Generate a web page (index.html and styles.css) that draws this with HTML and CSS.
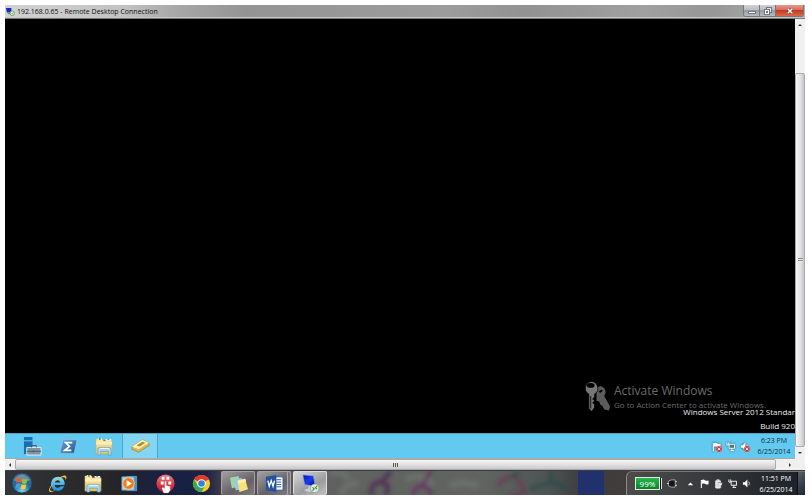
FILE: index.html
```html
<!DOCTYPE html>
<html lang="en">
<head>
  <meta charset="utf-8">
  <title>192.168.0.65 - Remote Desktop Connection</title>
  <link rel="stylesheet" href="styles.css">
</head>
<body>
  <!-- shared symbols -->
  <svg class="defs" aria-hidden="true">
    <defs>
      <linearGradient id="folder" x1="0" y1="0" x2="0" y2="1"><stop offset="0" stop-color="#fbeeb0"/><stop offset="1" stop-color="#e6c05c"/></linearGradient>
      <linearGradient id="red" x1="0" y1="0" x2="0" y2="1"><stop offset="0" stop-color="#f27a80"/><stop offset="1" stop-color="#b80f1b"/></linearGradient>
      <linearGradient id="ps" x1="0" y1="0" x2="1" y2="1"><stop offset="0" stop-color="#6ea6d6"/><stop offset="1" stop-color="#17548f"/></linearGradient>
      <linearGradient id="ie" x1="0" y1="0" x2="0" y2="1"><stop offset="0" stop-color="#7fe0ff"/><stop offset="1" stop-color="#1787d8"/></linearGradient>
      <linearGradient id="screen" x1="0" y1="0" x2="1" y2="1"><stop offset="0" stop-color="#0410b8"/><stop offset=".5" stop-color="#1a3df0"/><stop offset="1" stop-color="#04086e"/></linearGradient>
      <radialGradient id="orb" cx=".5" cy=".9" r=".9"><stop offset="0" stop-color="#6fd4f4"/><stop offset=".5" stop-color="#20679a"/><stop offset="1" stop-color="#506d84"/></radialGradient>
      <filter id="haze" x="-50%" y="-50%" width="200%" height="200%"><feGaussianBlur stdDeviation="2"/></filter>
      <symbol id="explorer" viewBox="0 0 20 20">
        <path d="M1 2h7l1 2h9v14H1z" fill="url(#folder)" stroke="#c9a348" stroke-width=".5"/>
        <path d="M3 1h4v2H3zM11 2h6v2h-6z" fill="#fff"/>
        <path d="M4 1h2v2H4z" fill="#28a060"/><path d="M9 3h2v1H9z" fill="#e04030"/><path d="M13 2h2v1h-2z" fill="#3b83d8"/>
        <path d="M1 5h17v3H1z" fill="#fdf4c8" opacity=".7"/>
        <path d="M3 19v-6q0-2 2-2h10q2 0 2 2v6h-3v-4H6v4z" fill="#a9d7f0" stroke="#5a9dc8" stroke-width=".7"/>
        <path d="M5 12h10" stroke="#edfaff"/>
      </symbol>
      <symbol id="rdp" viewBox="0 0 20 20">
        <path d="M2 1l11 1 2 11-11-2z" fill="url(#screen)" stroke="#7790e8" stroke-width=".6"/>
        <path d="M8 12l3 1v3l3 1-6 2-5-2 5-2z" fill="#c9ced8"/>
        <circle cx="14.5" cy="15" r="4.5" fill="#e4ece2" stroke="#8a9a88" stroke-width=".7"/>
        <path d="M12 14l2 1.500-2 2M17 12.500l-2 2 2 1.500" fill="none" stroke="#2f9a3a" stroke-width="1.1"/>
      </symbol>
      <symbol id="flag" viewBox="0 0 10 10">
        <path d="M1.500 1v9" stroke="#fff" stroke-width="1.2"/><path d="M2 1q2-1 3.500.5 1.500 1 4 .2v4q-2.500.7-4-.4Q4 4.500 2 5.300z" fill="#fff"/>
      </symbol>
      <symbol id="net" viewBox="0 0 10 10">
        <path d="M3.500 2.500h6v4.500h-6z" fill="#555" fill-opacity=".3" stroke="#fff"/><path d="M5 9.500h4M6.500 7v2M1 .5v3h2M3 .5v3" stroke="#fff" fill="none"/>
      </symbol>
      <symbol id="speaker" viewBox="0 0 10 10">
        <path d="M1 3.500h2L6 .5v9L3 6.500H1z" fill="#fff"/><path d="M7.500 3q1.500 2 0 4" stroke="#fff" fill="none" stroke-width=".8"/>
      </symbol>
      <symbol id="error" viewBox="0 0 6 6">
        <circle cx="3" cy="3" r="2.900" fill="#e23b38"/><path d="M1.700 1.700l2.600 2.600M4.300 1.700L1.700 4.300" stroke="#fff" stroke-width=".9"/>
      </symbol>
      <!-- small monitor for the title bar -->
      <symbol id="rdp-small" viewBox="0 0 10 10">
        <path d="M0 1h6v5H1z" fill="#1726c8"/><path d="M2 6h3v2H2z" fill="#888"/>
        <circle cx="7" cy="7" r="2.500" fill="#eef4ec" stroke="#4a9a4d" stroke-width=".8"/><path d="M6 7l1 1 1-2" fill="none" stroke="#2f9a3a" stroke-width=".8"/>
      </symbol>
    </defs>
  </svg>

  <div class="screen">
    <header class="titlebar">
      <svg class="title-icon"><use href="#rdp-small"/></svg>
      <h1 class="title">192.168.0.65 - Remote Desktop Connection</h1>
      <div class="window-buttons">
        <button class="win-btn" aria-label="Minimize"><svg viewBox="0 0 8 8"><path d="M0 4h8v3H0z" fill="#707782"/><path d="M1 5h6v1H1z" fill="#fff"/></svg></button>
        <button class="win-btn" aria-label="Restore"><svg viewBox="0 0 8 8"><path d="M2 0h6v6H6v2H0V2h2z" fill="#707782"/><path d="M3 1h4v4H6V2H3z" fill="#e8e8e8"/><path d="M1 3h4v4H1z" fill="#fff"/><path d="M2 4h2v2H2z" fill="#707782"/></svg></button>
        <button class="win-btn close" aria-label="Close"><svg viewBox="0 0 8 8"><path d="M1 1l6 6M7 1L1 7" stroke="#6b3430" stroke-width="3.400"/><path d="M1 1l6 6M7 1L1 7" stroke="#fff" stroke-width="2"/></svg></button>
      </div>
    </header>

    <div class="viewport">
      <main class="remote">
        <div class="desktop">
          <div class="activate">
            <svg class="keys" viewBox="0 0 28 32">
              <path d="M14 8q4-4 8 0 3 4 0 8l6 11-1 4-5-1-2-4-2-1-1-3-3-1z" fill="#5c5c5c"/>
              <path d="M8 1a7 7 0 0 1 4 13v3l-2 2 2 2-2 2 2 2v3l-3 4-3-3V14A7 7 0 0 1 8 1z" fill="#777" stroke="#000" stroke-width=".8"/>
              <ellipse cx="8" cy="5" rx="4" ry="2.500" fill="#000"/><path d="M8 16v13" stroke="#111"/>
              <path d="M17 12l3-2" stroke="#000" stroke-width="2"/>
            </svg>
            <div>
              <h2 class="activate-title">Activate Windows</h2>
              <p class="activate-text">Go to Action Center to activate Windows.</p>
            </div>
          </div>
          <div class="build">
            <p>Windows Server 2012 Standar</p>
            <p>Build 920</p>
          </div>
        </div>

        <nav class="remote-taskbar" aria-label="Remote taskbar">
          <button class="task" aria-label="Server Manager"><svg viewBox="0 0 20 20"><path d="M1 0h9v18H1z" fill="#1670b8"/><path d="M1 4h9" stroke="#83c8ee"/><path d="M4 11h15v8H4z" fill="#8194a4" stroke="#e8f2f8"/><path d="M9 11V9h5v2M4 15h15M11 14v2" fill="none" stroke="#44576a"/></svg></button>
          <button class="task" aria-label="PowerShell"><svg viewBox="0 0 20 20"><path d="M4 3h15l-3 14H1z" fill="url(#ps)" stroke="#a5cde9" stroke-width=".6"/><path d="M14 6H7l4 4-5 4h7" fill="none" stroke="#fff" stroke-width="1.800"/></svg></button>
          <button class="task" aria-label="File Explorer"><svg><use href="#explorer"/></svg></button>
          <button class="task active" aria-label="Package"><svg viewBox="0 0 20 20"><path d="M1 10L12 3l7 3v3L8 16l-7-3z" fill="#d9b64f" stroke="#907430" stroke-width=".6"/><path d="M1 10l7 3 11-7-7-3z" fill="#fff0a8"/><path d="M6 9l6-4 3 1-6 4z" fill="#a28b48"/></svg></button>
          <div class="tray">
            <span class="tray-icon"><svg class="outline"><use href="#flag"/></svg><svg class="badge"><use href="#error"/></svg></span>
            <span class="tray-icon"><svg class="outline"><use href="#net"/></svg></span>
            <span class="tray-icon"><svg class="outline"><use href="#speaker"/></svg><svg class="badge"><use href="#error"/></svg></span>
          </div>
          <div class="clock"><span>6:23 PM</span><span>6/25/2014</span></div>
        </nav>
      </main>

      <div class="vscroll">
        <button class="arrow" aria-label="Scroll up"><svg viewBox="0 0 4 4"><path d="M0 3l2-2 2 2z"/></svg></button>
        <div class="vtrack"></div>
        <div class="vthumb"><i class="grip"></i></div>
        <button class="arrow" aria-label="Scroll down"><svg viewBox="0 0 4 4"><path d="M0 1l2 2 2-2z"/></svg></button>
      </div>

      <div class="hscroll">
        <button class="arrow" aria-label="Scroll left"><svg viewBox="0 0 4 4"><path d="M3 0L1 2l2 2z"/></svg></button>
        <div class="hthumb"><i class="grip"></i></div>
        <div class="htrack"></div>
        <button class="arrow" aria-label="Scroll right"><svg viewBox="0 0 4 4"><path d="M1 0l2 2-2 2z"/></svg></button>
      </div>
      <div class="corner"></div>
    </div>

    <nav class="host-taskbar" aria-label="Taskbar">
      <!-- wallpaper showing through the glass -->
      <svg class="wallpaper" viewBox="0 0 800 25" preserveAspectRatio="none">
        <g filter="url(#haze)" fill="none" opacity=".75">
          <path d="M325 4q10-8 18 4M335 24q8-14 18-10M400 9q20-8 28 6M445 16q12-8 28 0" stroke="#6f746f" stroke-width="7"/>
          <path d="M366 25q0-14 10-13t5 13M376 12l10-12" stroke="#4d2657" stroke-width="5"/>
          <path d="M408 25q2-11 10-9t8 9M418 14l8-14" stroke="#6a2963" stroke-width="4"/>
          <path d="M492 16q14-16 20-8t8 14l-16 4" stroke="#713553" stroke-width="4"/>
          <path d="M505 6l10-4M525 18l22-6M545 0l2 12 16 6" stroke="#29474b" stroke-width="4"/>
        </g>
        <path d="M573 0h26v25h-26z" fill="#20316b"/>
      </svg>
      <button class="task" aria-label="Start"><svg class="orb" viewBox="0 0 24 24"><circle cx="12" cy="12" r="11" fill="url(#orb)" stroke="#243d50"/><path d="M3 9q9-12 18 0-9 4-18 0z" fill="#fff" opacity=".25"/><path d="M6.500 7q3-1.500 5 0l-.8 5q-2.500-1.400-5 0z" fill="#ef5b2a"/><path d="M12.500 7.300q2.500 1.500 5.500 0l-1 5q-2.500 1.500-5.200 0z" fill="#8bc53f"/><path d="M5.500 13q2.500-1.400 5 0l-1 5q-2.500-1.400-5 0z" fill="#3f9fe6"/><path d="M11.500 13.300q2.500 1.400 5.200 0l-1 5q-2.500 1.500-5.200 0z" fill="#fdca33"/></svg></button>
      <button class="task" aria-label="Internet Explorer"><svg viewBox="0 0 20 20"><path d="M17 13q-2 5-7 5-7-1-7-8 1-7 8-7 7 1 6.500 8.500H7q.5 3 3.500 3 2 0 3-1.500zM7 9h6q-.5-2.500-3-2.500T7 9z" fill="url(#ie)" fill-rule="evenodd"/><path d="M2 19q-3-2 3-9 6-7 12-8.500 4 0 1.500 5Q19 3 15 3.500 8 6 4 12q-3 5-1 5.500 2 1 5-1-3 3-6 2.500z" fill="#f5c430"/></svg></button>
      <button class="task" aria-label="Windows Explorer"><svg><use href="#explorer"/></svg></button>
      <button class="task" aria-label="Windows Media Player"><svg viewBox="0 0 20 20"><path d="M7 2h11v16H7z" fill="#4c91bf"/><path d="M2 3h13v14H2z" fill="#b5d7ec" stroke="#5897c2"/><circle cx="9" cy="10" r="6" fill="#f27a1b" stroke="#ffd3a0" stroke-width=".7"/><path d="M7 6.500v7l5.500-3.500z" fill="#fff"/></svg></button>
      <button class="task" aria-label="Remote control"><svg viewBox="0 0 20 20"><circle cx="10" cy="10" r="9.500" fill="url(#red)"/><path d="M6 3h3v3H6zM11 3h3v3h-3zM5 8h3v3H5zM13 8h3v3h-3z" fill="#fff"/><path d="M9 8q1-1 2 0v4l4 1v4l-2 3H8l-2-5 1-1 2 1z" fill="#fff" stroke="#c95460" stroke-width=".4"/></svg></button>
      <button class="task" aria-label="Chrome"><svg viewBox="0 0 20 20"><circle cx="10" cy="10" r="9" fill="#f8ce2b"/><path d="M10 10L2.200 5.500A9 9 0 0 1 17.800 5.500z" fill="#df3b2d"/><path d="M10 6h8.200q-.3-1-1-1.500L10 4z" fill="#df3b2d"/><path d="M2.200 5.500A9 9 0 0 0 10 19l4-7-4 2-4-2z" fill="#3aa757"/><circle cx="10" cy="10" r="4.500" fill="#fff"/><circle cx="10" cy="10" r="3.500" fill="#3b7ede"/></svg></button>
      <button class="task open" aria-label="Sticky Notes"><svg viewBox="0 0 20 20"><path d="M1 4l9-2 2 11-9 2z" fill="#a3d59a"/><path d="M5 6l8-2 3 12-9 1z" fill="#90cbe8"/><path d="M9 7l8-2 3 11-9 3z" fill="#fae27a"/><path d="M9 7l8-2 1 3-8 2z" fill="#fff2ac"/></svg></button>
      <button class="task open stacked" aria-label="Word"><svg viewBox="0 0 20 20"><path d="M10 3h9v14h-9z" fill="#fff" stroke="#2d5a9c"/><path d="M12 6h5M12 8.500h5M12 11h5M12 13.500h5" stroke="#2d5a9c"/><path d="M1 3l11-2v18L1 17z" fill="#24539b"/><path d="M3 7l1.500 6 2-6 2 6L10 7" fill="none" stroke="#fff" stroke-width="1.400"/></svg></button>
      <button class="task open current" aria-label="Remote Desktop Connection"><svg><use href="#rdp"/></svg></button>

      <div class="host-tray">
        <span class="battery">99%</span>
        <svg class="plug" viewBox="0 0 12 10"><path d="M1 5q0-4 4-4h4v8H5Q1 9 1 5z" fill="#151515" stroke="#ccc" stroke-width=".8"/><path d="M9 3h2M9 7h2M0 5h2" stroke="#eee"/></svg>
        <div class="tray">
          <span class="tray-icon"><svg viewBox="0 0 10 10"><path d="M2 7l3-3 3 3z" fill="#fff"/></svg></span>
          <span class="tray-icon"><svg><use href="#flag"/></svg></span>
          <span class="tray-icon"><svg viewBox="0 0 10 10"><path d="M2 2h5v8H2zM3 1h3" fill="#d8d8d8" stroke="#fff"/><path d="M5 4h4v3H8v3" fill="#eee" stroke="#444" stroke-width=".6"/></svg></span>
          <span class="tray-icon"><svg><use href="#net"/></svg></span>
          <span class="tray-icon"><svg><use href="#speaker"/></svg></span>
        </div>
        <div class="clock"><span>11:51 PM</span><span>6/25/2014</span></div>
        <button class="show-desktop" aria-label="Show desktop"></button>
      </div>
    </nav>
  </div>
</body>
</html>
```
FILE: styles.css
```css
* {
  box-sizing: border-box;
}

body {
  margin: 0;
  background: #fff;
  font-family: "Open Sans", "Noto Sans", sans-serif;
  font-size: 8px;
}

h1, h2, p {
  margin: 0;
  font-weight: normal;
}

button {
  display: flex;
  align-items: center;
  justify-content: center;
  padding: 0;
  border: 0;
  background: none;
}

svg {
  display: block;
  overflow: visible;
}

.defs {
  position: absolute;
  width: 0;
  height: 0;
}

.screen {
  display: flex;
  flex-direction: column;
  height: 100vh;
  padding: 5px 7px 5px 5px;
}

/* title bar */
.titlebar {
  display: flex;
  align-items: center;
  height: 14px;
  padding: 0 1px;
  border-bottom: 1px solid #777;
  box-shadow: inset 0 -1px #c8c8c8;
  background: linear-gradient(100deg, #d2d2d2 0%, #c2c2c2 15%, #a6a6a6 22%, #949494 30%, #9c9c9c 55%, #929292 65%, #a0a0a0 80%, #969696 88%, #b2b2b2 100%);
}

.title-icon {
  width: 9px;
  height: 9px;
}

.title {
  flex: 1;
  padding-left: 2px;
  color: #111;
  font-size: 7px;
  line-height: 14px;
  white-space: nowrap;
}

.window-buttons {
  display: flex;
  align-self: flex-start;
  border: 1px solid #777;
  border-top: 0;
  border-radius: 0 0 3px 3px;
  overflow: hidden;
}

.win-btn {
  width: 16px;
  height: 11px;
  border-right: 1px solid #777;
  background: linear-gradient(#d0d1d4 0, #babdc1 45%, #969ba0 50%, #b8bcc0 100%);
}

.win-btn svg {
  width: 8px;
  height: 8px;
}

.win-btn.close {
  width: 27px;
  border-right: 0;
  background: linear-gradient(#e59a8c 0, #d66c58 45%, #c23b22 50%, #de6847 100%);
}

.win-btn.close svg {
  width: 6px;
  height: 6px;
}

/* remote session */
.viewport {
  flex: 1;
  display: grid;
  grid-template-columns: 1fr 10px;
  grid-template-rows: 1fr 12px;
  min-height: 0;
}

.remote {
  display: flex;
  flex-direction: column;
  min-width: 0;
  overflow: hidden;
}

.desktop {
  flex: 1;
  position: relative;
  background: #000;
}

.activate {
  position: absolute;
  right: 29px;
  bottom: 21px;
  display: flex;
  gap: 4px;
  color: #6b6b6b;
  white-space: nowrap;
}

.keys {
  width: 27px;
  height: 32px;
}

.activate-title {
  font-size: 12px;
  line-height: 18px;
  padding-top: 2px;
}

.activate-text {
  font-size: 8px;
  line-height: 10px;
}

.build {
  position: absolute;
  right: 0;
  bottom: 0;
  color: #eee;
  text-align: right;
  font-size: 8px;
  line-height: 14px;
  white-space: nowrap;
}

/* taskbars */
.remote-taskbar {
  display: flex;
  align-items: stretch;
  height: 25px;
  padding-left: 9px;
  background: #62caf0;
  border-top: 1px solid #4fa3c3;
}

.task {
  width: 36px;
  flex: none;
  overflow: hidden;
}

.task svg {
  width: 19px;
  height: 19px;
}

.task .orb {
  width: 22px;
  height: 22px;
}

.task.active {
  background: #83d5f3;
  border: 1px solid #4aa7cf;
  border-width: 0 1px;
}

.tray {
  display: flex;
  align-items: center;
  gap: 5px;
  margin-right: 4px;
}

.tray-icon {
  position: relative;
  width: 9px;
  height: 9px;
}

.tray-icon svg {
  width: 9px;
  height: 9px;
}

.tray-icon .outline {
  filter: drop-shadow(0 0 1px #234);
}

.tray-icon .badge {
  position: absolute;
  right: -1px;
  bottom: -1px;
  width: 6px;
  height: 6px;
}

.remote-taskbar .tray {
  margin-left: auto;
}

.clock {
  display: flex;
  flex-direction: column;
  justify-content: center;
  align-items: center;
  width: 42px;
  font-size: 7px;
  line-height: 11px;
  color: #12303c;
  white-space: nowrap;
}

.host-taskbar {
  position: relative;
  display: flex;
  height: 25px;
  overflow: hidden;
  border-top: 1px solid #3c3d40;
  background: linear-gradient(90deg, #32373c 0, #2b2a2c 8%, #252428 14%, #182044 20%, #1a2143 25%, #50474e 28%, #5e5c60 37%, #60635f 43%, #60645f 60%, #4c5552 68%, #3e3d40 72%, #403d3a 77%, #343638 84%, #1e2329 95%, #18202a 100%);
}

.wallpaper {
  position: absolute;
  width: 100%;
  height: 100%;
}

.host-taskbar .task,
.host-tray {
  position: relative;
}

.host-taskbar .task:nth-of-type(1) {
  width: 34px;
}

.task.open {
  width: 34px;
  margin-right: 2px;
  border: 1px solid #a5a3a6;
  border-bottom: 0;
  border-radius: 2px;
  background: linear-gradient(150deg, #a29fa2, #656167 60%, #817c81);
}

.task.open:nth-of-type(7) {
  margin-left: 2px;
}

.task.stacked {
  box-shadow: inset -2px 0 #77757a, inset -3px 0 #aaa;
}

.task.current {
  background: linear-gradient(150deg, #d8d8d9, #9c9c9e 60%, #c4c2c3);
  border-color: #ddd;
}

.host-tray {
  display: flex;
  align-items: center;
  margin-left: auto;
  padding-left: 8px;
  border-left: 1px solid #8c8c8c;
  border-top: 1px solid #777;
  border-radius: 6px 0 0 0;
  background: linear-gradient(90deg, rgba(90, 90, 90, .5), rgba(30, 35, 40, .4));
}

.battery {
  width: 25px;
  height: 13px;
  border: 1px solid #e5e5e5;
  background: linear-gradient(#27b74b, #07832a);
  box-shadow: 2px 0 0 -1px #111, 3px 0 0 -1px #ddd;
  color: #fff;
  font-size: 8px;
  line-height: 11px;
  text-align: center;
}

.plug {
  width: 11px;
  height: 9px;
  margin: 0 8px 0 7px;
}

.host-tray .clock {
  color: #fff;
}

.show-desktop {
  align-self: stretch;
  width: 8px;
  border-left: 1px solid #0c1014;
  background: linear-gradient(135deg, #56606a, #1d252d);
}

/* scroll bars */
.vscroll,
.hscroll {
  display: flex;
  background: #f0f0f0;
}

.vscroll {
  flex-direction: column;
}

.arrow {
  flex: none;
  width: 10px;
  height: 11px;
}

.arrow svg {
  width: 4px;
  height: 4px;
  fill: #333;
}

.vtrack {
  height: 11%;
  flex: none;
  margin-bottom: -5px;
}

.vthumb,
.hthumb {
  display: flex;
  align-items: center;
  justify-content: center;
  border: 1px solid #aaa;
  border-radius: 2px;
}

.vthumb {
  flex: 1;
  background: linear-gradient(90deg, #f6f6f6, #e4e4e6 50%, #c6c7cb);
}

.hscroll {
  align-items: center;
  border-top: 1px solid #aaa;
}

.hthumb {
  flex: 1;
  height: 11px;
  background: linear-gradient(#f6f6f6, #e2e2e3 50%, #c8c8cb);
}

.htrack {
  width: 9px;
}

.grip {
  width: 5px;
  height: 4px;
  background: repeating-linear-gradient(90deg, #555 0, #555 1px, #ddd 1px, #ddd 2px);
}

.vthumb .grip {
  background: repeating-linear-gradient(#888 0, #888 1px, #eee 1px, #eee 2px);
}

.corner {
  background: #f0f0f0;
}
```
